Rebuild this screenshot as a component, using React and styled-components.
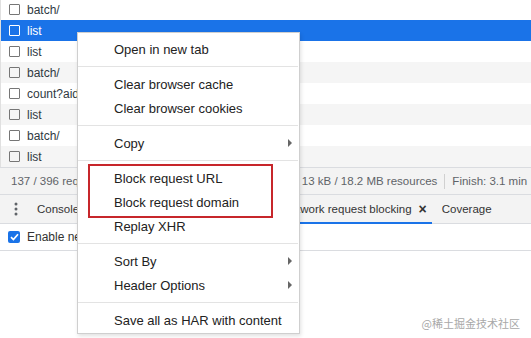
import React from "react";
import styled, { createGlobalStyle, css } from "styled-components";

const GlobalStyle = createGlobalStyle`
  html, body {
    margin: 0;
    padding: 0;
    background: #fff;
  }
  body {
    width: 531px;
    height: 338px;
    overflow: hidden;
    font-family: "Liberation Sans", Arial, sans-serif;
    color: #303942;
  }
`;

const requests = [
  { name: "batch/" },
  { name: "list", selected: true },
  { name: "list" },
  { name: "batch/" },
  { name: "count?aid=2608&uuid=6936" },
  { name: "list" },
  { name: "batch/" },
  { name: "list" },
];

const statusItems = [
  "137 / 396 requests",
  "196.4 kB / 13,102 kB transferred",
  "13 kB / 18.2 MB resources",
  "Finish: 3.1 min",
];

const tabs = [
  { label: "Console" },
  { label: "Changes" },
  { label: "Network conditions" },
  { label: "Network request blocking", active: true, closable: true },
  { label: "Coverage" },
];

const menuGroups = [
  [{ label: "Open in new tab" }],
  [{ label: "Clear browser cache" }, { label: "Clear browser cookies" }],
  [{ label: "Copy", submenu: true }],
  [
    { label: "Block request URL" },
    { label: "Block request domain" },
    { label: "Replay XHR" },
  ],
  [
    { label: "Sort By", submenu: true },
    { label: "Header Options", submenu: true },
  ],
  [{ label: "Save all as HAR with content" }],
];

export default function App() {
  return (
    <>
      <GlobalStyle />
      <StyledPage>
        <StyledRequestList>
          {requests.map(({ name, selected }, index) => (
            <StyledRow key={index} $selected={selected} $odd={index % 2 === 1}>
              <StyledRowCheckbox $selected={selected} />
              <span>{name}</span>
            </StyledRow>
          ))}
        </StyledRequestList>

        <StyledStatusBar>
          {statusItems.map((item) => (
            <span key={item}>{item}</span>
          ))}
        </StyledStatusBar>

        <StyledDrawer>
          <StyledTabBar>
            <StyledMoreButton>
              <svg width="4" height="14" viewBox="0 0 4 14">
                <circle cx="2" cy="2" r="1.5" fill="#5f6368" />
                <circle cx="2" cy="7" r="1.5" fill="#5f6368" />
                <circle cx="2" cy="12" r="1.5" fill="#5f6368" />
              </svg>
            </StyledMoreButton>
            {tabs.map(({ label, active, closable }) => (
              <StyledTab key={label} $active={active} $closable={closable}>
                {label}
                {closable ? <StyledClose>×</StyledClose> : null}
              </StyledTab>
            ))}
          </StyledTabBar>
          <StyledToolbar>
            <StyledCheckbox>
              <svg width="9" height="8" viewBox="0 0 9 8">
                <path
                  d="M1 4.2 L3.4 6.5 L8 1.2"
                  fill="none"
                  stroke="#fff"
                  strokeWidth="1.7"
                />
              </svg>
            </StyledCheckbox>
            <span>Enable network request blocking</span>
          </StyledToolbar>
        </StyledDrawer>

        <StyledMenu>
          {menuGroups.map((group, groupIndex) => (
            <React.Fragment key={groupIndex}>
              {groupIndex > 0 ? <StyledSeparator /> : null}
              {group.map(({ label, submenu }) => (
                <StyledMenuItem key={label}>
                  {label}
                  {submenu ? <StyledArrow /> : null}
                </StyledMenuItem>
              ))}
            </React.Fragment>
          ))}
        </StyledMenu>

        <StyledHighlight />
        <StyledWatermark>@稀土掘金技术社区</StyledWatermark>
      </StyledPage>
    </>
  );
}

const StyledPage = styled.div`
  position: relative;
  width: 531px;
  height: 338px;
  overflow: hidden;
  display: flex;
  flex-direction: column;
`;

const StyledRequestList = styled.ul`
  list-style: none;
  margin: -1px 0 0;
  padding: 0;
  border-left: 1px solid #e0e0e0;
`;

const StyledRow = styled.li`
  display: flex;
  align-items: center;
  gap: 6px;
  height: 21px;
  padding-left: 8px;
  font-size: 12px;
  white-space: nowrap;
  overflow: hidden;
  color: #303942;
  background: ${({ $odd }) => ($odd ? "#f5f5f5" : "#fff")};

  ${({ $selected }) =>
    $selected &&
    css`
      background: #1a73e8;
      color: #fff;
    `};
`;

const StyledRowCheckbox = styled.span`
  box-sizing: border-box;
  width: 11px;
  height: 11px;
  border: 1px solid ${({ $selected }) => ($selected ? "#fff" : "#767676")};
  border-radius: 1px;
  background: transparent;
  flex-shrink: 0;
  margin-right: 1px;
`;

const StyledStatusBar = styled.div`
  display: flex;
  align-items: center;
  height: 26px;
  padding-left: 4px;
  background: #f3f3f3;
  border-top: 1px solid #dadce0;
  border-bottom: 1px solid #dadce0;
  font-size: 11.5px;
  color: #5f6368;
  white-space: nowrap;

  span {
    padding: 0 7px;
    line-height: 15px;
  }

  span + span {
    border-left: 1px solid #d0d0d0;
  }
`;

const StyledDrawer = styled.section`
  display: flex;
  flex-direction: column;
`;

const StyledTabBar = styled.div`
  display: flex;
  align-items: stretch;
  height: 28px;
  background: #f3f3f3;
  border-bottom: 1px solid #dadce0;
  white-space: nowrap;
`;

const StyledMoreButton = styled.div`
  display: flex;
  align-items: center;
  justify-content: center;
  width: 27px;
  padding-left: 5px;
  box-sizing: border-box;
`;

const StyledTab = styled.div`
  display: flex;
  align-items: center;
  padding: 0 ${({ $closable }) => ($closable ? "5px" : "10px")} 0 10px;
  font-size: 11.5px;
  color: #333;
  border-bottom: 2px solid
    ${({ $active }) => ($active ? "#1a73e8" : "transparent")};
  margin-bottom: -1px;
  padding-top: 1px;
`;

const StyledClose = styled.span`
  margin-left: 7px;
  font-size: 14px;
  color: #333;
  font-weight: bold;
`;

const StyledToolbar = styled.div`
  display: flex;
  align-items: center;
  gap: 7px;
  height: 26px;
  padding-left: 8px;
  border-bottom: 1px solid #dadce0;
  font-size: 12px;
  color: #333;
  white-space: nowrap;
`;

const StyledCheckbox = styled.span`
  display: flex;
  align-items: center;
  justify-content: center;
  width: 12px;
  height: 12px;
  border-radius: 2px;
  background: #1a73e8;
`;

const StyledMenu = styled.div`
  position: absolute;
  left: 77px;
  top: 32px;
  width: 221px;
  padding: 4px 0 1px;
  background: #fff;
  border: 1px solid #cfcfcf;
  box-shadow: 1px 2px 4px rgba(0, 0, 0, 0.12);
`;

const StyledMenuItem = styled.div`
  position: relative;
  display: flex;
  align-items: center;
  height: 24px;
  padding-left: 36px;
  font-size: 13px;
  color: #222;
  white-space: nowrap;
`;

const StyledArrow = styled.span`
  position: absolute;
  right: 7px;
  top: 8px;
  width: 0;
  height: 0;
  border-top: 4px solid transparent;
  border-bottom: 4px solid transparent;
  border-left: 4px solid #666;
`;

const StyledSeparator = styled.div`
  height: 1px;
  margin: 5px 1px 5px 0;
  background: #e3e3e3;
`;

const StyledHighlight = styled.div`
  position: absolute;
  left: 88px;
  top: 164px;
  width: 181px;
  height: 50px;
  border: 2px solid #c7262b;
  pointer-events: none;
`;

const StyledWatermark = styled.div`
  position: absolute;
  right: 11px;
  bottom: 7px;
  font-family: "Noto Sans CJK SC", "Noto Sans", sans-serif;
  font-size: 11px;
  color: #a8a8a8;
`;
